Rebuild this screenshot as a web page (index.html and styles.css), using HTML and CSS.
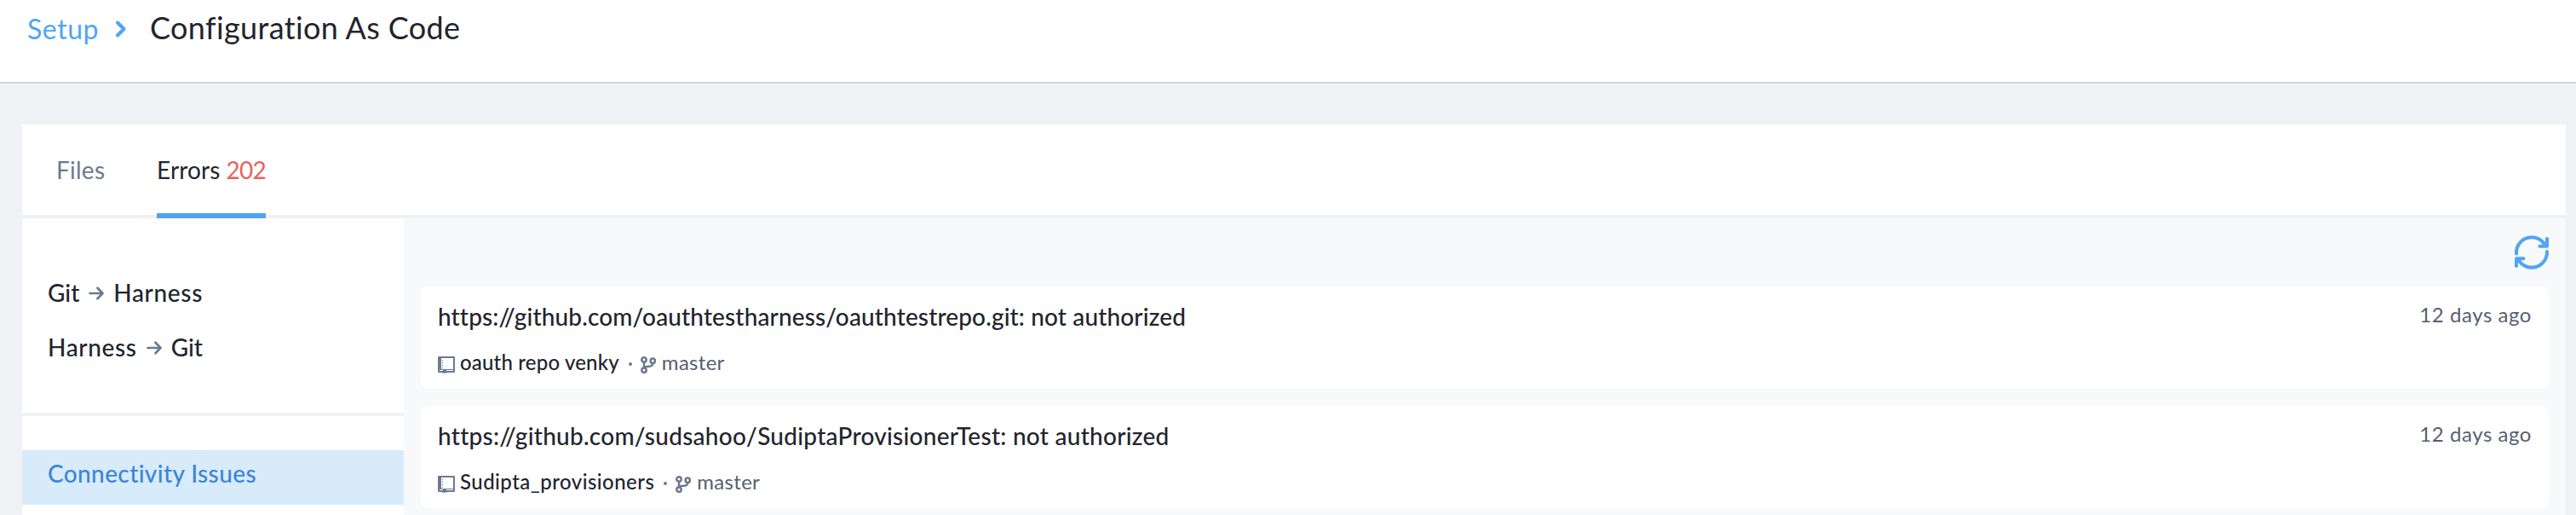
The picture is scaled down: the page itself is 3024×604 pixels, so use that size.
FILE: index.html
```html
<!DOCTYPE html>
<html lang="en">
<head>
<meta charset="utf-8">
<title>Configuration As Code</title>
<link rel="stylesheet" href="styles.css">
</head>
<body>
<svg class="defs" aria-hidden="true">
  <symbol id="repo" viewBox="0 0 20 20">
    <path fill="currentColor" fill-rule="evenodd" d="M1 0h18q1 0 1 1v17q0 1-1 1h-8.500v1l-1.500-.8-1.500.8-1-.7-1.500.7v-1H1q-1 0-1-1V1q0-1 1-1zM4 2v13h14V2zM2 16v1h4v-1zM10 16v1h8v-1z"/>
    <path stroke="currentColor" stroke-width="1" stroke-dasharray="1.300 1.700" d="M5.500 4v10"/>
  </symbol>
  <symbol id="branch" viewBox="0 0 18 20">
    <g fill="none" stroke="currentColor" stroke-width="2.500">
      <circle cx="4" cy="4" r="2.700"/><circle cx="4" cy="16.200" r="2.700"/><circle cx="14.300" cy="5.200" r="2.700"/>
      <path d="M4 6.500v7M14.300 8c0 3-1.500 3.700-5 3.700-3 0-4.500.5-5.300 1.800"/>
    </g>
  </symbol>
  <symbol id="arrow" viewBox="0 0 18 16">
    <path fill="none" stroke="currentColor" stroke-width="2.700" stroke-linecap="round" stroke-linejoin="round" d="M1.500 8h15M10.500 1.800 16.500 8l-6 6.200"/>
  </symbol>
</svg>
<header class="header">
  <a class="crumb">Setup</a>
  <svg class="chevron" viewBox="0 0 14 20"><path d="M3 2.500 10.500 10 3 17.500"/></svg>
  <h1 class="title">Configuration As Code</h1>
</header>
<main class="panel">
  <nav class="tabs">
    <a class="tab files">Files</a>
    <a class="tab active"><span class="tab-name">Errors</span><span class="count">202</span></a>
  </nav>
  <div class="body">
    <aside class="sidebar">
      <div class="directions">
        <div class="item"><span class="git">Git</span><svg class="arrow"><use href="#arrow"/></svg><span class="harness">Harness</span></div>
        <div class="item"><span class="harness">Harness</span><svg class="arrow"><use href="#arrow"/></svg><span class="git">Git</span></div>
      </div>
      <div class="filters">
        <div class="item selected">Connectivity Issues</div>
      </div>
    </aside>
    <section class="content">
      <div class="toolbar">
        <svg class="refresh" viewBox="0 0 40 40"><path d="M2 21.500V20A18 18 0 0 1 36 12M38 4v8.700h-8.500M38 19v1A18 18 0 0 1 4 28M2 36v-8.700h8.500"/></svg>
      </div>
      <article class="card">
        <div class="row"><div class="message first">https://github.com/oauthtestharness/oauthtestrepo.git: not authorized</div><div class="time">12 days ago</div></div>
        <div class="meta"><svg class="repo"><use href="#repo"/></svg><span class="name oauth">oauth repo venky</span><i class="dot"></i><svg class="branch"><use href="#branch"/></svg><span class="ref">master</span></div>
      </article>
      <article class="card">
        <div class="row"><div class="message second">https://github.com/sudsahoo/SudiptaProvisionerTest: not authorized</div><div class="time">12 days ago</div></div>
        <div class="meta"><svg class="repo"><use href="#repo"/></svg><span class="name sudipta">Sudipta_provisioners</span><i class="dot"></i><svg class="branch"><use href="#branch"/></svg><span class="ref">master</span></div>
      </article>
    </section>
  </div>
</main>
</body>
</html>
```
FILE: styles.css
```css
* { box-sizing: border-box; }
body { margin: 0; height: 604px; overflow: hidden; background: #f0f1f4; color: #22252d; font: 28px Lato, "Liberation Sans", sans-serif; white-space: nowrap; }
svg { display: block; flex: none; }
.defs { display: none; }

.header { display: flex; height: 98px; padding: 2px 0 0 32px; background: #fff; border-bottom: 2px solid #d3d6df; line-height: 64px; }
.crumb { width: 103px; color: #4fa5f5; font-size: 32px; letter-spacing: .55px; }
.chevron { width: 14px; height: 20px; margin: 22px 27px 0 0; fill: none; stroke: #4fa5f5; stroke-width: 4; stroke-linecap: round; stroke-linejoin: round; }
.title { margin: 0; font-size: 36px; font-weight: 400; line-height: 60px; letter-spacing: .36px; }

.panel { margin: 48px 12px 0 26px; }
.tabs { display: flex; gap: 60px; height: 110px; padding-left: 40px; background: #fff; border-bottom: 4px solid #f0f1f4; line-height: 106px; }
.tab { height: 110px; }
.files { width: 58px; color: #6b7a90; letter-spacing: .25px; }
.active { display: flex; width: 128px; border-bottom: 6px solid #4fa5f5; }
.tab-name { width: 83px; letter-spacing: .15px; }
.count { color: #e8625c; letter-spacing: -.7px; }

.body { display: flex; height: 348px; }
.sidebar { width: 448px; background: #fff; font-weight: 500; }
.directions { height: 232px; padding-top: 60px; border-bottom: 4px solid #f0f1f4; }
.filters { padding-top: 40px; }
.item { display: flex; height: 64px; padding: 0 0 10px 30px; line-height: 54px; }
.selected { color: #3d85d8; background: #d8ebfb; letter-spacing: .38px; }
.arrow { width: 18px; height: 16px; margin: 20px 11px 0 11px; color: #6b7a90; }
.harness { letter-spacing: .65px; }

.content { flex: 1; padding: 0 20px; background: #f8f9fb; }
.toolbar { display: flex; justify-content: flex-end; height: 80px; padding-top: 20px; }
.refresh { width: 40px; height: 40px; fill: none; stroke: #4fa5f5; stroke-width: 4; stroke-linecap: round; stroke-linejoin: round; }
.card { height: 120px; margin-bottom: 20px; padding: 18px 20px 0 20px; background: #fff; border-radius: 8px; }
.row { display: flex; justify-content: space-between; height: 57px; line-height: 34px; }
.message { font-weight: 500; }
.first { letter-spacing: .13px; }
.second { letter-spacing: .26px; }
.time { margin-top: -2px; color: #555f71; font-size: 24px; letter-spacing: .55px; }
.meta { display: flex; font-size: 24px; line-height: 28px; }
.repo { width: 20px; height: 20px; margin: 7px 6px 0 0; color: #6b7a90; }
.name { font-weight: 500; }
.oauth { letter-spacing: .18px; }
.sudipta { letter-spacing: .45px; }
.dot { width: 4px; height: 4px; margin: 14px 10px 0 11px; border-radius: 50%; background: #6b7a90; }
.branch { width: 18px; height: 20px; margin: 7px 7px 0 0; color: #6b7a90; }
.ref { color: #555f71; letter-spacing: .3px; }
```
